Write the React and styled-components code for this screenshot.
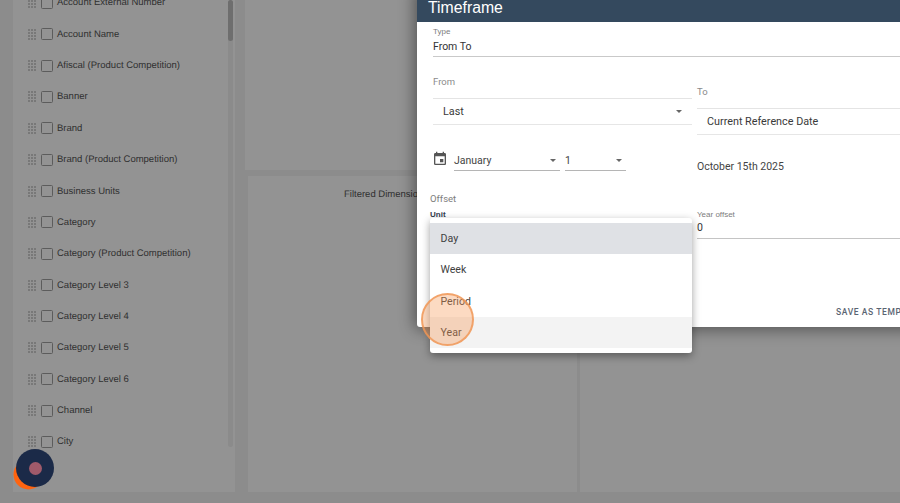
import React from 'react'
import styled, { createGlobalStyle } from 'styled-components'
import { MdEvent } from 'react-icons/md'

const GlobalStyle = createGlobalStyle`
  html, body { margin: 0; padding: 0; }
  body { font-family: "Liberation Sans", Arial, sans-serif; overflow: hidden; }
`

const dimensions = [
  'Account External Number',
  'Account Name',
  'Afiscal (Product Competition)',
  'Banner',
  'Brand',
  'Brand (Product Competition)',
  'Business Units',
  'Category',
  'Category (Product Competition)',
  'Category Level 3',
  'Category Level 4',
  'Category Level 5',
  'Category Level 6',
  'Channel',
  'City',
]

const units = ['Day', 'Week', 'Period', 'Year']

function Grip() {
  const dots = []
  for (let r = 0; r < 4; r++) {
    for (let c = 0; c < 3; c++) {
      dots.push(<rect key={`${r}-${c}`} x={c * 3} y={r * 3} width="2" height="2" />)
    }
  }
  return (
    <GripIcon viewBox="0 0 8 11" aria-hidden="true">
      {dots}
    </GripIcon>
  )
}

function App() {
  return (
    <>
      <GlobalStyle />
      <Page>
        <Sidebar>
          <List>
            {dimensions.map((name) => (
              <Row key={name}>
                <Grip />
                <Check />
                <RowLabel>{name}</RowLabel>
              </Row>
            ))}
          </List>
          <Scrollbar>
            <ScrollThumb />
          </Scrollbar>
        </Sidebar>

        <Middle>
          <TopCard />
          <FilterCard>
            <FilterTitle>Filtered Dimensions</FilterTitle>
          </FilterCard>
        </Middle>
        <RightCard />

        <Modal>
          <ModalHeader>Timeframe</ModalHeader>
          <ModalBody>
            <TypeField>
              <SmallLabel>Type</SmallLabel>
              <Value $top={4}>From To</Value>
            </TypeField>

            <Columns>
              <FromColumn>
                <GroupLabel>From</GroupLabel>
                <SelectBox>
                  <SelectText>Last</SelectText>
                  <Caret />
                </SelectBox>
                <DateRow>
                  <CalendarIcon />
                  <DateSelect $width={106}>
                    <span>January</span>
                    <Caret />
                  </DateSelect>
                  <DateSelect $width={61}>
                    <span>1</span>
                    <Caret />
                  </DateSelect>
                </DateRow>
              </FromColumn>
              <ToColumn>
                <GroupLabel>To</GroupLabel>
                <SelectBox>
                  <SelectText>Current Reference Date</SelectText>
                </SelectBox>
                <DateText>October 15th 2025</DateText>
              </ToColumn>
            </Columns>

            <OffsetTitle>Offset</OffsetTitle>
            <OffsetRow>
              <UnitField>
                <UnitLabel>Unit</UnitLabel>
              </UnitField>
              <YearField>
                <SmallLabel>Year offset</SmallLabel>
                <Value $top={2}>0</Value>
              </YearField>
            </OffsetRow>

            <Actions>
              <TextButton>SAVE AS TEMPLATE</TextButton>
            </Actions>
          </ModalBody>
        </Modal>

        <Menu>
          {units.map((unit) => (
            <MenuItem key={unit} $selected={unit === 'Day'} $hover={unit === 'Year'}>
              {unit}
            </MenuItem>
          ))}
        </Menu>
        <ClickMark />

        <Fab>
          <FabDot />
        </Fab>
      </Page>
    </>
  )
}

export default App

const Page = styled.div`
  position: relative;
  width: 900px;
  height: 503px;
  overflow: hidden;
  background: #8c8c8c;
  display: flex;
  align-items: stretch;
  padding: 0 0 11px 13px;
  box-sizing: border-box;
`

const Sidebar = styled.div`
  width: 222px;
  flex: none;
  background: #939393;
  position: relative;
  overflow: hidden;
`

const List = styled.div`
  margin-top: -12.8px;
  padding-left: 15px;
`

const Row = styled.div`
  height: 31.36px;
  display: flex;
  align-items: center;
`

const GripIcon = styled.svg`
  width: 8px;
  height: 11px;
  fill: #787878;
  flex: none;
`

const Check = styled.span`
  width: 10px;
  height: 10px;
  border: 1.5px solid #5c5c5c;
  border-radius: 1.5px;
  margin-left: 5px;
  flex: none;
`

const RowLabel = styled.span`
  margin-left: 4px;
  font-size: 9.5px;
  color: #303030;
  white-space: nowrap;
  text-rendering: geometricPrecision;
`

const Scrollbar = styled.div`
  position: absolute;
  top: 0;
  right: 2px;
  bottom: 45px;
  width: 5px;
  background: #8b8b8b;
  border-radius: 3px;
`

const ScrollThumb = styled.div`
  height: 41px;
  background: #6e6e6e;
  border-radius: 3px;
`

const Middle = styled.div`
  width: 332px;
  flex: none;
  margin-left: 10px;
  display: flex;
  flex-direction: column;
  gap: 6px;
`

const TopCard = styled.div`
  height: 170px;
  background: #939393;
`

const FilterCard = styled.div`
  flex: 1;
  margin-left: 3px;
  background: #939393;
  padding: 13px 0 0 96px;
`

const FilterTitle = styled.div`
  font-size: 9.5px;
  color: #303030;
  white-space: nowrap;
  text-rendering: geometricPrecision;
`

const RightCard = styled.div`
  flex: 1;
  margin-left: 3px;
  margin-top: 176px;
  background: #939393;
`

const Modal = styled.div`
  position: absolute;
  left: 417px;
  top: -10px;
  width: 620px;
  height: 337px;
  background: #fff;
  border-radius: 3px;
  box-shadow: 0 0 15px 3px rgba(0, 0, 0, 0.42);
  display: flex;
  flex-direction: column;
`

const ModalHeader = styled.div`
  height: 32px;
  flex: none;
  box-sizing: border-box;
  padding: 8px 0 0 11px;
  background: #34495e;
  color: #fff;
  font-size: 15.8px;
  line-height: 20px;
`

const ModalBody = styled.div`
  padding: 5px 0 0 16px;
  flex: 1;
  display: flex;
  flex-direction: column;
  color: #3a3a3a;
  font-family: Roboto, "Liberation Sans", sans-serif;
`

const TypeField = styled.div`
  height: 29px;
  border-bottom: 1.5px solid #c9c9c9;
`

const SmallLabel = styled.div`
  font-size: 8px;
  line-height: 9px;
  color: #7d7d7d;
  font-family: "Liberation Sans", Arial, sans-serif;
`

const Value = styled.div`
  font-size: 10.5px;
  line-height: 14px;
  margin-top: ${(p) => p.$top}px;
  color: #333;
`

const Columns = styled.div`
  display: flex;
  gap: 5px;
  margin-top: 19px;
`

const FromColumn = styled.div`
  width: 259px;
  flex: none;
`

const ToColumn = styled.div`
  flex: 1;
  padding-top: 10px;
`

const GroupLabel = styled.div`
  font-size: 9.5px;
  line-height: 12px;
  height: 23px;
  box-sizing: border-box;
  color: #8a8a8a;
  border-bottom: 1px solid #e4e4e4;
`

const SelectBox = styled.div`
  height: 26px;
  box-sizing: border-box;
  border-bottom: 1.5px solid #e6e6e6;
  display: flex;
  align-items: center;
  justify-content: space-between;
  padding: 0 10px 0 10px;
`

const SelectText = styled.span`
  font-size: 10.8px;
  color: #3a3a3a;
`

const Caret = styled.span`
  width: 0;
  height: 0;
  border-left: 3.5px solid transparent;
  border-right: 3.5px solid transparent;
  border-top: 3.5px solid #666;
`

const DateRow = styled.div`
  display: flex;
  align-items: flex-end;
  margin-top: 25px;
  height: 21px;
`

const CalendarIcon = styled(MdEvent)`
  width: 16px;
  height: 16px;
  color: #555;
  margin: 0 6px 4px -1px;
  flex: none;
`

const DateSelect = styled.div`
  width: ${(p) => p.$width}px;
  height: 21px;
  box-sizing: border-box;
  margin-right: 5px;
  border-bottom: 1.5px solid #b5b5b5;
  display: flex;
  align-items: center;
  justify-content: space-between;
  padding-right: 4px;
  font-size: 10.5px;
  color: #444;
`

const DateText = styled.div`
  font-size: 10.5px;
  margin-top: 25px;
  color: #444;
`

const OffsetTitle = styled.div`
  font-size: 9.5px;
  line-height: 12px;
  margin: 20px 0 0 -3px;
  color: #7d7d7d;
`

const OffsetRow = styled.div`
  display: flex;
  margin-top: 5px;
`

const UnitField = styled.div`
  width: 264px;
  flex: none;
`

const UnitLabel = styled.div`
  font-size: 8px;
  line-height: 9px;
  margin-left: -3px;
  color: #333d4d;
  font-weight: 700;
  font-family: "Liberation Sans", Arial, sans-serif;
`

const YearField = styled.div`
  flex: 1;
  height: 28px;
  border-bottom: 1.5px solid #c4c4c4;
`

const Actions = styled.div`
  margin-top: auto;
  padding: 0 0 9px 403px;
`

const TextButton = styled.div`
  font-size: 8.5px;
  line-height: 12px;
  font-weight: 500;
  letter-spacing: 0.6px;
  color: #5a6472;
  white-space: nowrap;
`

const Menu = styled.div`
  position: absolute;
  left: 430px;
  top: 218px;
  width: 262px;
  box-sizing: border-box;
  padding: 4.6px 0;
  background: #fff;
  border-radius: 3px;
  box-shadow: 0 3px 8px rgba(0, 0, 0, 0.38);
`

const MenuItem = styled.div`
  height: 31.4px;
  padding-left: 10.5px;
  display: flex;
  align-items: center;
  font-family: Roboto, "Liberation Sans", sans-serif;
  font-size: 10.6px;
  color: #3f3f3f;
  background: ${(p) => (p.$selected ? '#dfe1e5' : p.$hover ? '#f3f3f3' : 'transparent')};
`

const ClickMark = styled.div`
  position: absolute;
  left: 421px;
  top: 293px;
  width: 53px;
  height: 53px;
  box-sizing: border-box;
  border-radius: 50%;
  border: 2px solid rgba(240, 150, 85, 0.8);
  background: rgba(245, 150, 80, 0.35);
`

const Fab = styled.div`
  position: absolute;
  left: 16px;
  top: 449px;
  width: 38px;
  height: 38px;
  border-radius: 50%;
  background: #1b2a48;
  display: flex;
  align-items: center;
  justify-content: center;
  box-shadow: -6.5px 6.5px 0 -4px #ff6410;
`

const FabDot = styled.div`
  width: 13px;
  height: 13px;
  border-radius: 50%;
  background: #a05a6a;
`
